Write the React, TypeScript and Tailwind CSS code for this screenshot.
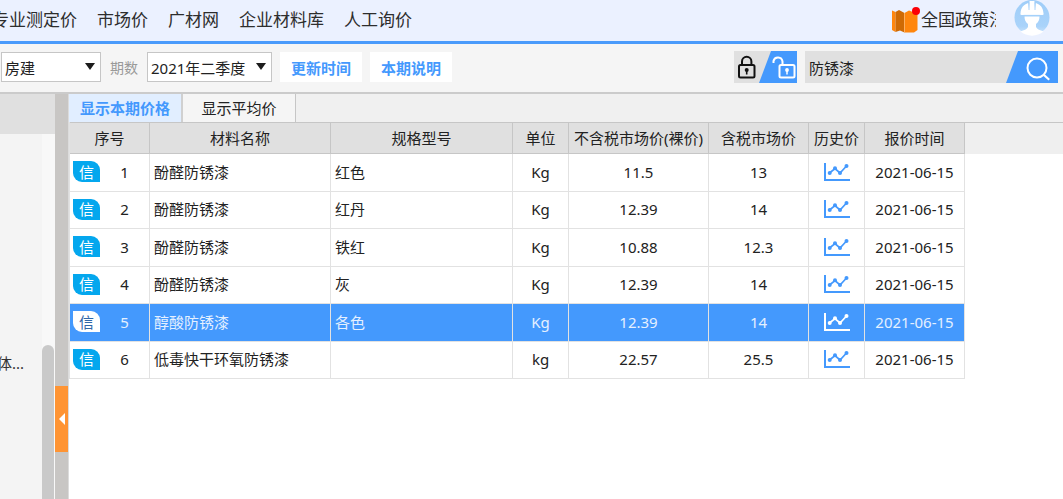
import { useState } from "react";

const NAV = ["专业测定价", "市场价", "广材网", "企业材料库", "人工询价"];

const COLUMNS = [
  { label: "序号", width: "w-20" },
  { label: "材料名称", width: "w-[181px]" },
  { label: "规格型号", width: "w-[182px]" },
  { label: "单位", width: "w-14" },
  { label: "不含税市场价(裸价)", width: "w-[140px]" },
  { label: "含税市场价", width: "w-[100px]" },
  { label: "历史价", width: "w-14" },
  { label: "报价时间", width: "w-[100px]" },
];

const ROWS = [
  { name: "酚醛防锈漆", spec: "红色", unit: "Kg", bare: "11.5", taxed: "13" },
  { name: "酚醛防锈漆", spec: "红丹", unit: "Kg", bare: "12.39", taxed: "14" },
  { name: "酚醛防锈漆", spec: "铁红", unit: "Kg", bare: "10.88", taxed: "12.3" },
  { name: "酚醛防锈漆", spec: "灰", unit: "Kg", bare: "12.39", taxed: "14" },
  { name: "醇酸防锈漆", spec: "各色", unit: "Kg", bare: "12.39", taxed: "14" },
  { name: "低毒快干环氧防锈漆", spec: "", unit: "kg", bare: "22.57", taxed: "25.5" },
];

type DropdownProps = { id: string; label?: string; options: string[]; className: string };

function Dropdown({ id, label, options, className }: DropdownProps) {
  return (
    <div className={`relative h-[30px] ${className}`}>
      <select
        id={id}
        aria-label={label}
        className="h-full w-full appearance-none border border-[#c6c6c6] bg-white pt-0.5 pl-[3px] text-[15px] leading-5 text-[#222]"
      >
        {options.map((o) => (
          <option key={o}>{o}</option>
        ))}
      </select>
      <svg className="pointer-events-none absolute top-[11px] right-1.5 h-[7px] w-2.5" viewBox="0 0 10 7">
        <path d="M0 0h10L5 7z" fill="#1c1c1c" />
      </svg>
    </div>
  );
}

function BookIcon() {
  return (
    <svg className="h-[26px] w-7 shrink-0" viewBox="0 0 28 26">
      <path d="M0 3.5 3.500 5V25L0 23z" fill="#ff860d" />
      <path d="M3.500 5 7 3l5.500 3v19.500L8 23.500 3.500 25z" fill="#cf6a04" />
      <path d="M12.500 6 17 3.500 22 5.500l3.500-2V23L22 25.500h-9.500z" fill="#ff860d" />
      <path d="M12.500 6v19.500" stroke="#ffb568" strokeWidth=".8" />
      <circle cx="24" cy="4" r="4" fill="#fb0007" />
    </svg>
  );
}

function Avatar() {
  return (
    <svg className="h-9 w-9" viewBox="0 0 36 36">
      <defs>
        <linearGradient id="sky" x1="0" y1="0" x2="0" y2="1">
          <stop offset="0" stopColor="#9fcdf8" />
          <stop offset=".75" stopColor="#a9d3fa" />
          <stop offset="1" stopColor="#d3e8fd" />
        </linearGradient>
      </defs>
      <circle cx="18" cy="17.500" r="17.500" fill="url(#sky)" />
      <path d="M10.500 16.500h15c0 3.500-1 5.500-3.500 7.500v3c1 2.500 4 3 7.500 4.500-6 5.500-17 5.500-23 0 3.500-1.500 6.500-2 7.500-4.500v-3c-2.500-2-3.500-4-3.500-7.500z" fill="#fff" />
      <path d="M6.500 13.500c.3-6 3.200-9 7.700-10.500l.8 6 .6-8h4.800l.6 8 .8-6c4.500 1.500 7.400 4.500 7.700 10.500.5.700-.2 1.500-1 1.500H7.500c-.8 0-1.500-.8-1-1.500z" fill="#fff" />
      <path d="M15 2.500v7.500m6-7.500v7.500M9.500 15.400h17" stroke="#a5d0f9" strokeWidth=".9" fill="none" />
    </svg>
  );
}

function LockSwitch() {
  return (
    <button aria-label="锁定" className="h-8 w-[63px] bg-[#e0e0e0]">
      <svg className="h-8 w-[63px]" viewBox="0 0 63 32">
        <path d="M37 0h26v32H25z" fill="#4499fd" />
        <g fill="none" stroke="#111" strokeWidth="2">
          <rect x="5" y="14" width="15.500" height="12.500" rx="1.500" />
          <path d="M8 14v-3.500a4.700 4.700 0 0 1 9.400 0V14" />
        </g>
        <circle cx="12.700" cy="19" r="2" fill="#111" />
        <path d="M12.700 19v4.500" stroke="#111" strokeWidth="1.600" />
        <g fill="none" stroke="#fff" strokeWidth="2">
          <rect x="45.500" y="14" width="15" height="12.500" rx="1.500" />
          <path d="M48.500 14v-3.500a4.600 4.600 0 0 0-9-.5v2" />
        </g>
        <circle cx="53" cy="19" r="1.900" fill="#fff" />
        <path d="M53 19v4.500" stroke="#fff" strokeWidth="1.500" />
      </svg>
    </button>
  );
}

function TrendIcon() {
  return (
    <svg className="mx-auto h-[18px] w-[26px]" viewBox="0 0 26 18" fill="none" stroke="currentColor">
      <path d="M1 0v17h25" strokeWidth="2" />
      <path d="M5.500 10 11 5.500l5 4.500 6.500-7" strokeWidth="1.700" />
      <g fill="currentColor" stroke="none">
        <circle cx="5.700" cy="10" r="2" />
        <circle cx="11" cy="5.300" r="2" />
        <circle cx="16" cy="10" r="2" />
        <circle cx="22.500" cy="3" r="2" />
      </g>
    </svg>
  );
}

export default function App() {
  const [selected, setSelected] = useState(4);
  const [query, setQuery] = useState("防锈漆");

  return (
    <div className="flex h-screen flex-col overflow-hidden bg-white font-['Noto_Sans','Noto_Sans_CJK_SC',sans-serif] text-[15px] leading-5 text-[#222]">
      <header className="flex h-11 shrink-0 items-center justify-between border-b-[3px] border-[#4a9bfb] bg-[#ebf1ff] pr-[13px] pb-0.5">
        <nav className="-ml-2 flex gap-5 text-[17px] leading-6 text-[#2d2d2d]">
          {NAV.map((n) => (
            <a key={n} href="#" className="whitespace-nowrap">
              {n}
            </a>
          ))}
        </nav>
        <div className="flex items-center">
          <a href="#" className="flex items-center gap-px text-[17px] leading-6 text-[#2d2d2d]">
            <BookIcon />
            <span className="w-[75px] overflow-hidden whitespace-nowrap">全国政策法规</span>
          </a>
          <a href="#" aria-label="用户" className="ml-[18px] -mt-1">
            <Avatar />
          </a>
        </div>
      </header>

      <div className="flex h-[50px] shrink-0 items-center justify-between border-b-2 border-[#cbcbcb] bg-[#f5f5f5] pr-[5px] pb-0.5 pl-px">
        <div className="flex items-center">
          <Dropdown id="trade" label="专业" options={["房建", "市政"]} className="w-[100px]" />
          <label htmlFor="period" className="px-[9px] pt-0.5 text-sm text-[#999]">
            期数
          </label>
          <Dropdown id="period" options={["2021年二季度", "2021年一季度"]} className="w-[125px]" />
          <button className="ml-2 h-[30px] w-[82px] bg-white pt-0.5 font-bold text-[#4499fd]">更新时间</button>
          <button className="ml-2 h-[30px] w-[82px] bg-white pt-0.5 font-bold text-[#4499fd]">本期说明</button>
        </div>
        <div className="flex gap-2">
          <LockSwitch />
          <form className="flex h-8 w-[253px] bg-[#e0e0e0]" onSubmit={(e) => e.preventDefault()}>
            <input
              aria-label="搜索材料"
              value={query}
              onChange={(e) => setQuery(e.target.value)}
              className="min-w-0 flex-1 bg-transparent pt-0.5 pl-1 text-[15px] outline-none"
            />
            <button aria-label="搜索">
              <svg className="h-8 w-[52px]" viewBox="0 0 52 32">
                <path d="M12 0h40v32H0z" fill="#4499fd" />
                <circle cx="31" cy="17" r="9.500" fill="none" stroke="#fff" strokeWidth="2" />
                <path d="m37.700 23.700 5.500 5" stroke="#fff" strokeWidth="2.200" />
              </svg>
            </button>
          </form>
        </div>
      </div>

      <div className="flex min-h-0 flex-1">
        <aside className="flex w-[55px] shrink-0 flex-col bg-[#f4f4f4]">
          <div className="h-10 shrink-0 bg-[#e0e0e0]" />
          <div className="flex min-h-0 flex-1">
            <div className="w-[42px] pt-[219px]">
              <p className="-ml-[3px] whitespace-nowrap text-[#333]">体...</p>
            </div>
            <div className="flex flex-1 flex-col bg-[#f8f8f8] pt-[211px] pr-px">
              <div className="flex-1 rounded-t-md bg-[#c9c9c9]" />
            </div>
          </div>
        </aside>
        <div className="w-3.5 shrink-0 border-r border-[#dcdcdc] bg-[#c8c6c4] pt-[292px]">
          <button aria-label="收起" className="flex h-[66px] w-full items-center justify-center bg-[#ff9433]">
            <svg className="h-3 w-1.5" viewBox="0 0 6 12">
              <path d="M6 0v12L0 6z" fill="#fff" />
            </svg>
          </button>
        </div>

        <main className="min-w-0 flex-1">
          <div role="tablist" className="flex h-7 bg-[#f0f0f0]">
            <button
              role="tab"
              aria-selected="true"
              className="w-[114px] border-r-2 border-[#d0d0d0] bg-[#e1eeff] font-bold text-[#4499fd]"
            >
              显示本期价格
            </button>
            <button role="tab" aria-selected="false" className="w-[113px] border-r border-[#c6c6c6] bg-[#f5f5f5]">
              显示平均价
            </button>
          </div>
          <div className="flex items-start">
            <table className="w-[896px] shrink-0 table-fixed border-separate border-spacing-0 border-l border-[#e2e2e2] text-center">
              <thead>
                <tr className="h-8">
                  {COLUMNS.map((c) => (
                    <th
                      key={c.label}
                      className={`border-t border-r border-b border-[#c6c6c6] bg-[#e0e0e0] p-0 font-normal whitespace-nowrap ${c.width}`}
                    >
                      {c.label}
                    </th>
                  ))}
                </tr>
              </thead>
              <tbody className="[&_td]:border-r [&_td]:border-b [&_td]:border-[#e2e2e2] [&_td]:p-0 [&_td]:pb-0.5">
                {ROWS.map((r, i) => {
                  const on = i === selected;
                  return (
                    <tr
                      key={i}
                      onClick={() => setSelected(i)}
                      className={`odd:h-[38px] even:h-[37px] ${on ? "bg-[#4499fd] text-[#e4f0ff]" : ""}`}
                    >
                      <td>
                        <div className="flex items-center pl-[3px]">
                          <span
                            className={`flex h-[21px] w-[27px] items-center justify-center rounded-tr-[9px] rounded-bl-[9px] ${
                              on ? "bg-white text-[#2f66a8]" : "bg-[#04a7ee] text-white"
                            }`}
                          >
                            信
                          </span>
                          <span className="w-[49px]">{i + 1}</span>
                        </div>
                      </td>
                      <td className="text-left">
                        <span className="pl-1">{r.name}</span>
                      </td>
                      <td className="text-left">
                        <span className="pl-1">{r.spec}</span>
                      </td>
                      <td>{r.unit}</td>
                      <td>{r.bare}</td>
                      <td>{r.taxed}</td>
                      <td className={on ? "text-white" : "text-[#4499fd]"}>
                        <TrendIcon />
                      </td>
                      <td>2021-06-15</td>
                    </tr>
                  );
                })}
              </tbody>
            </table>
            <div className="h-8 flex-1 border-t border-[#c6c6c6] bg-[#efefef]" />
          </div>
        </main>
      </div>
    </div>
  );
}
